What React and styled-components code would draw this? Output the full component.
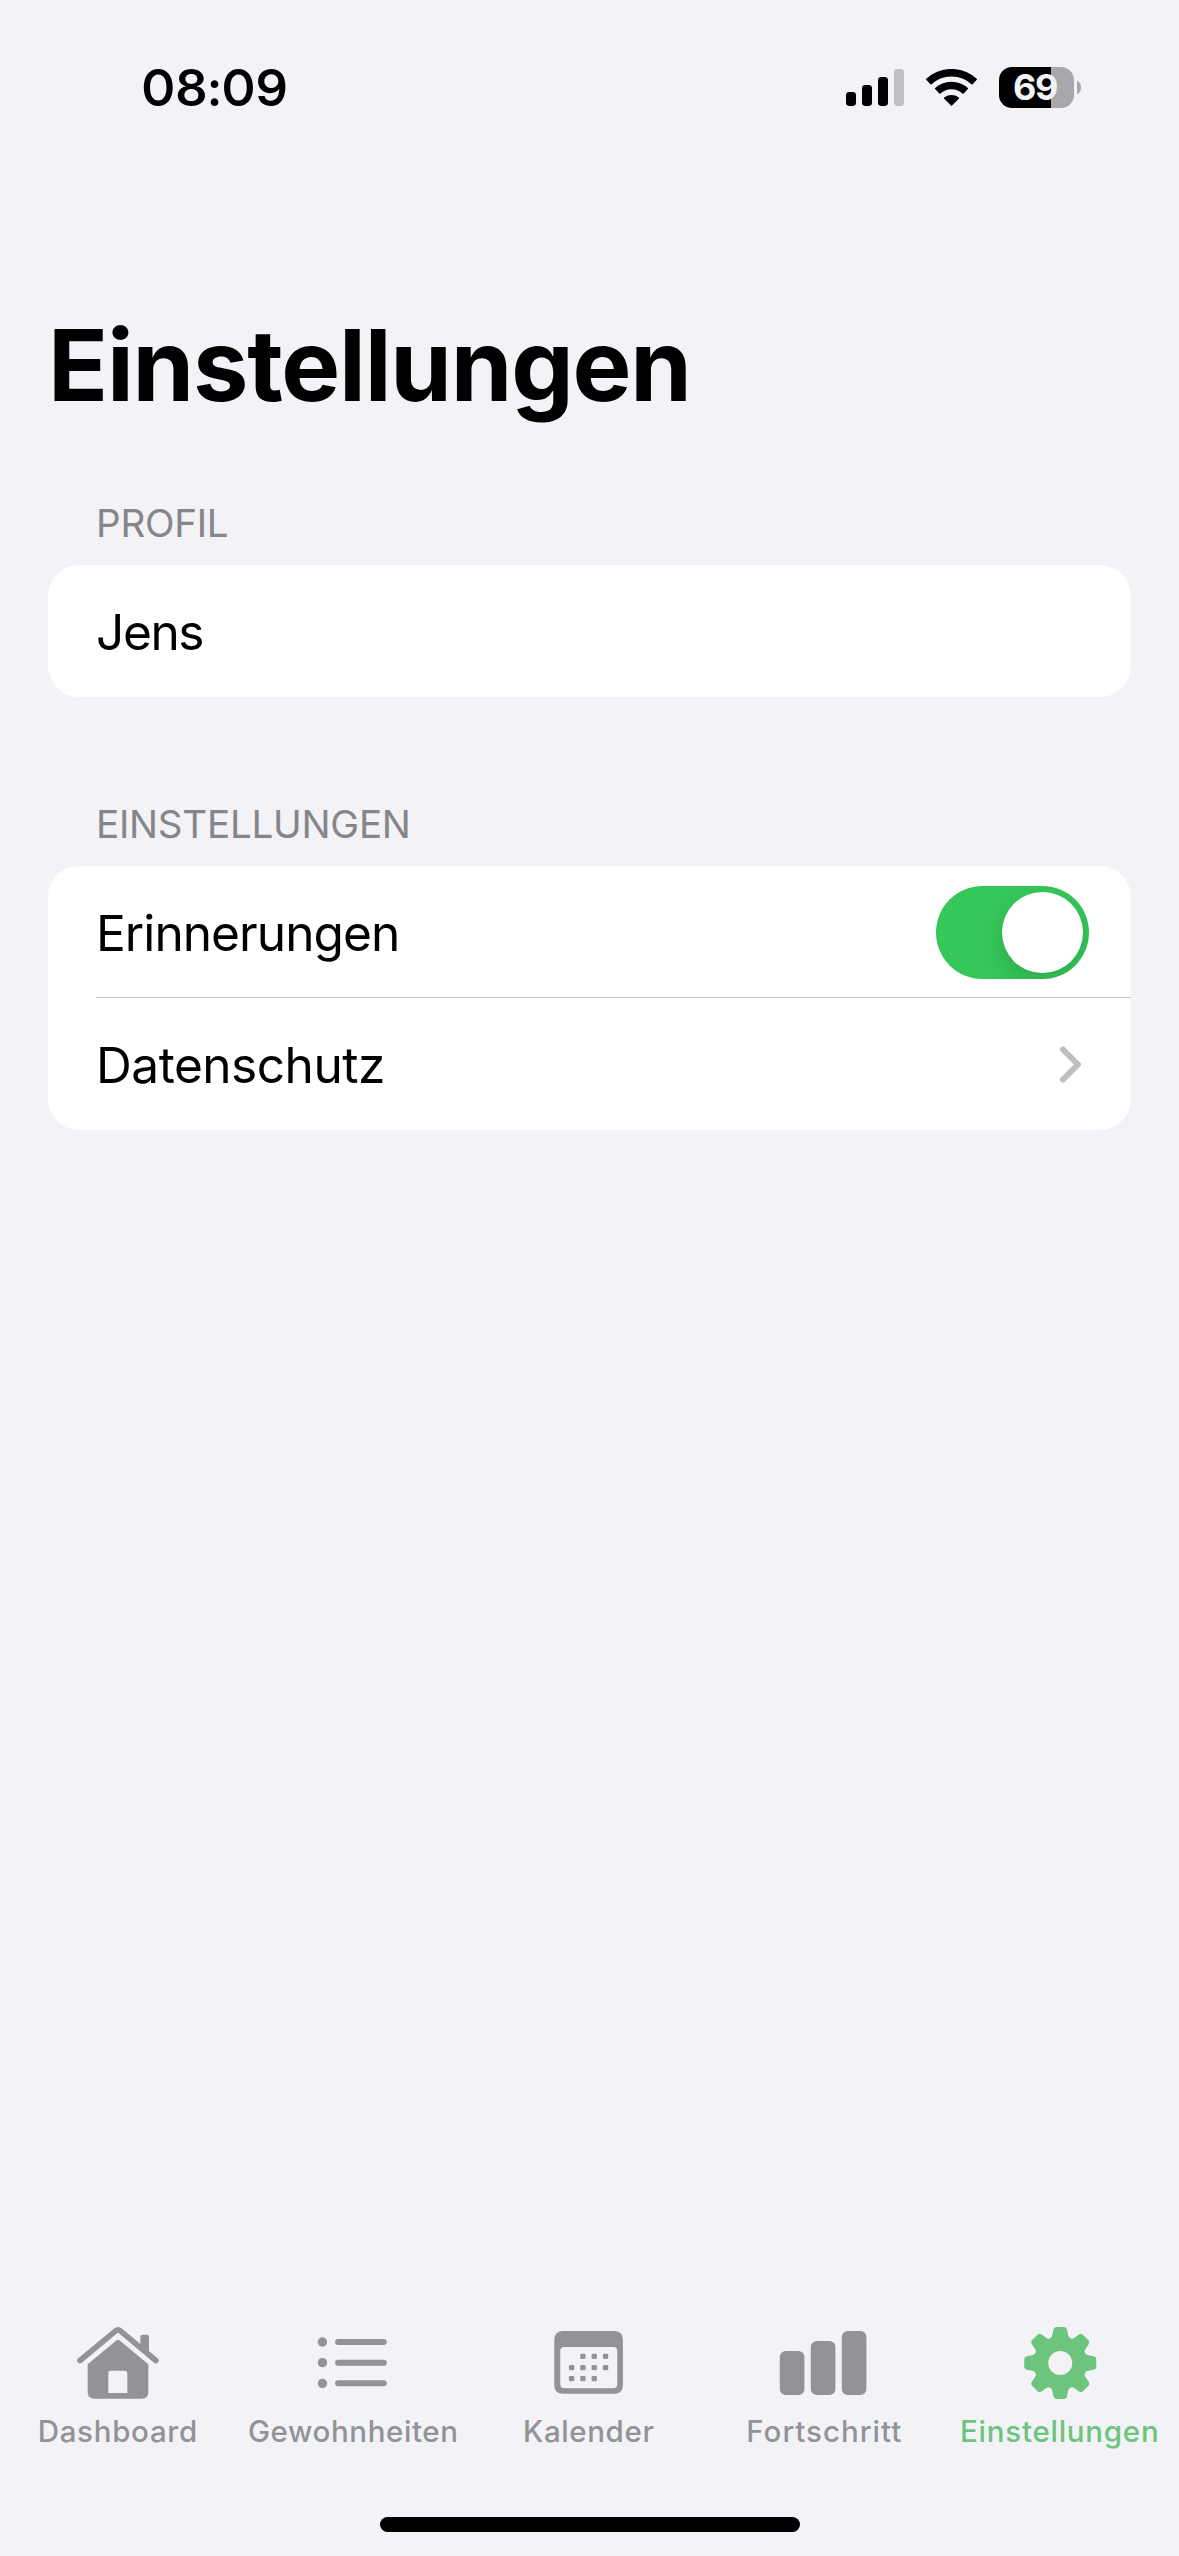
import { useState } from "react";
import styled, { createGlobalStyle } from "styled-components";

const GlobalStyle = createGlobalStyle`
  body {
    margin: 0;
    background: #f2f2f7;
  }
  * {
    box-sizing: border-box;
  }
`;

const ScreenEl = styled.div`
  display: flex;
  flex-direction: column;
  width: 1179px;
  height: 2556px;
  overflow: hidden;
  background: #f2f2f7;
  color: #000;
  font-family: Inter, "Liberation Sans", sans-serif;
`;

/* status bar */
const StatusBarEl = styled.header`
  display: flex;
  justify-content: space-between;
  align-items: center;
  height: 175px;
  padding: 0 98px 0 142px;
`;
const TimeEl = styled.div`
  padding-top: 1px;
  font-family: "Inter Display", Inter, "Liberation Sans", sans-serif;
  font-size: 51px;
  font-weight: 600;
  line-height: 60px;
  letter-spacing: 1.6px;
`;
const StatusIconsEl = styled.div`
  display: flex;
  align-items: center;
  gap: 22px;
`;
const BatteryEl = styled.div`
  display: flex;
  align-items: center;
  gap: 3px;
`;
const BatteryBodyEl = styled.div`
  width: 75px;
  height: 41px;
  padding-right: 3px;
  border-radius: 13px;
  background: linear-gradient(to right, #000 52px, #a8a7ac 52px);
  color: #f2f2f7;
  font-size: 36px;
  font-weight: 700;
  line-height: 41px;
  letter-spacing: -1.5px;
  text-align: center;
`;
const BatteryCapEl = styled.div`
  width: 4px;
  height: 13px;
  border-radius: 0 4px 4px 0 / 0 6.5px 6.5px 0;
  background: #a8a7ac;
`;

/* content */
const ContentEl = styled.main`
  flex: 1;
  padding: 130px 48px 0;
`;
const TitleEl = styled.h1`
  margin: 0 0 74px;
  font-size: 99px;
  font-weight: 700;
  line-height: 120px;
  letter-spacing: -1.2px;
  white-space: nowrap;
`;
const SectionEl = styled.section`
  margin-bottom: 103px;
`;
const SectionTitleEl = styled.h2`
  margin: 0 0 18px;
  padding-left: 48px;
  color: #85858a;
  font-size: 38.6px;
  font-weight: 400;
  line-height: 48px;
  letter-spacing: -0.25px;
  text-transform: uppercase;
`;
const CardEl = styled.div`
  border-radius: 31px;
  background: #fff;
`;
const RowEl = styled.div`
  display: flex;
  justify-content: space-between;
  align-items: center;
  height: 132px;
  margin-left: 48px;
  padding: 2px ${(p) => p.$right || 49}px 0 0;
  border-bottom: ${(p) => (p.$divider ? "1px solid #c6c6c8" : "none")};
  font-size: 49.6px;
  line-height: 60px;
  letter-spacing: ${(p) => p.$tracking || -0.95}px;
`;
const SwitchEl = styled.button`
  display: flex;
  justify-content: ${(p) => (p.$on ? "flex-end" : "flex-start")};
  width: 153px;
  height: 93px;
  padding: 6px;
  border: 0;
  border-radius: 47px;
  overflow: hidden;
  background: ${(p) => (p.$on ? "#35c759" : "#e9e9ea")};
`;
const KnobEl = styled.span`
  width: 81px;
  height: 81px;
  border-radius: 50%;
  background: #fff;
  box-shadow: 0 9px 24px rgba(0, 0, 0, 0.15);
`;
const ChevronEl = styled.svg`
  margin-bottom: 2px;
`;

/* tab bar */
const TabBarEl = styled.nav`
  display: grid;
  grid-template-columns: repeat(5, 235.5px);
  height: 172px;
`;
const TabEl = styled.a`
  display: flex;
  flex-direction: column;
  align-items: center;
  gap: 9px;
  color: ${(p) => (p.$active ? "#6cc47d" : "#929397")};
  font-size: 29.5px;
  font-weight: 500;
  line-height: 36px;
  letter-spacing: ${(p) => p.$tracking}px;
  white-space: nowrap;
`;
const HomeIndicatorEl = styled.div`
  width: 420px;
  height: 15px;
  margin: 25px auto 24px 380px;
  border-radius: 8px;
  background: #000;
`;

const SignalIcon = () => (
  <svg width="58" height="37" viewBox="0 0 58 37">
    <rect x="0" y="23" width="10" height="14" rx="3.4" />
    <rect x="16" y="16" width="10" height="21" rx="3.4" />
    <rect x="32" y="8" width="10" height="29" rx="3.4" />
    <rect x="48" y="0" width="10" height="37" rx="3.4" fill="#bfbec4" />
  </svg>
);

const WifiIcon = () => (
  <svg width="51" height="37" viewBox="288.5 57 153 111">
    <g fill="none" stroke="#000" strokeWidth="22.5">
      <path d="M295.5 96.1A100 100 0 0 1 434.5 96.1" />
      <path d="M322.3 123.8A61.5 61.5 0 0 1 407.7 123.8" />
    </g>
    <path d="M365 168L343 146.500Q341 144 344 142A35 35 0 0 1 386 142Q389 144 387 146.500Z" />
  </svg>
);

const ChevronIcon = () => (
  <ChevronEl width="22" height="37" viewBox="0 0 22 37">
    <path
      d="M3 3.500L18 18.500L3 33.500"
      fill="none"
      stroke="#bfbfbf"
      strokeWidth="6"
      strokeLinecap="round"
      strokeLinejoin="round"
    />
  </ChevronEl>
);

const TabIcon = ({ x, children }) => (
  <svg width="90" height="84" viewBox={`${x} 30 270 252`} fill="currentColor">
    {children}
  </svg>
);

const HomeIcon = () => (
  <TabIcon x={158}>
    <path
      d="M179 151.500L286 62.500Q293 57 300 62.500L406.500 151.500"
      fill="none"
      stroke="currentColor"
      strokeWidth="17"
      strokeLinecap="round"
    />
    <path d="M360 113V80Q360 74 366 74H380Q386 74 386 80V135Z" />
    <path
      fillRule="evenodd"
      d="M202 163L287 92Q293 87 299 92L384 163V246Q384 266 364 266H222Q202 266 202 246ZM264 249H321V189Q321 182 314 182H271Q264 182 264 189Z"
    />
  </TabIcon>
);

const ListIcon = () => (
  <TabIcon x={234.75}>
    {[96, 158, 220].map((y) => (
      <g key={y}>
        <circle cx="278" cy={y} r="14" />
        <rect x="316" y={y - 9} width="155" height="18" rx="9" />
      </g>
    ))}
  </TabIcon>
);

const dots = [
  [248, 139], [282, 139], [316, 139],
  [214, 173], [248, 173], [282, 173], [316, 173],
  [214, 206], [248, 206], [282, 206],
];

const CalendarIcon = () => (
  <TabIcon x={131.25}>
    <path
      fillRule="evenodd"
      d="M189 63H341Q368 63 368 90V224Q368 251 341 251H189Q162 251 162 224V90Q162 63 189 63ZM192 111Q180 111 180 123V223Q180 235 192 235H339Q351 235 351 223V123Q351 111 339 111Z"
    />
    {dots.map(([x, y]) => (
      <rect key={`${x}-${y}`} x={x - 8} y={y - 8} width="16" height="16" rx="4" />
    ))}
  </TabIcon>
);

const ChartIcon = () => (
  <TabIcon x={147.75}>
    <rect x="150" y="123" width="74" height="132" rx="18" />
    <rect x="243" y="93" width="74" height="162" rx="18" />
    <rect x="336" y="63" width="74" height="192" rx="18" />
  </TabIcon>
);

const GearIcon = () => (
  <TabIcon x={209.25}>
    <g transform="translate(345 159)">
      <circle r="57.5" fill="none" stroke="currentColor" strokeWidth="43" />
      {[0, 45, 90, 135, 180, 225, 270, 315].map((angle) => (
        <path
          key={angle}
          transform={`rotate(${angle})`}
          d="M-30.600 -73.900Q-25 -76 -23.500 -84L-20.500 -100Q-19 -108 -12 -108H12Q19 -108 20.500 -100L23.500 -84Q25 -76 30.600 -73.900L20 -50H-20Z"
        />
      ))}
    </g>
  </TabIcon>
);

const tabs = [
  { name: "Dashboard", Icon: HomeIcon, tracking: 0.7 },
  { name: "Gewohnheiten", Icon: ListIcon, tracking: 0.6 },
  { name: "Kalender", Icon: CalendarIcon, tracking: 0.6 },
  { name: "Fortschritt", Icon: ChartIcon, tracking: 1 },
  { name: "Einstellungen", Icon: GearIcon, tracking: 0.75 },
];

const App = () => {
  const [reminders, setReminders] = useState(true);
  const [active, setActive] = useState("Einstellungen");

  return (
    <ScreenEl>
      <GlobalStyle />
      <StatusBarEl>
        <TimeEl>08:09</TimeEl>
        <StatusIconsEl>
          <SignalIcon />
          <WifiIcon />
          <BatteryEl>
            <BatteryBodyEl>69</BatteryBodyEl>
            <BatteryCapEl />
          </BatteryEl>
        </StatusIconsEl>
      </StatusBarEl>

      <ContentEl>
        <TitleEl>Einstellungen</TitleEl>

        <SectionEl>
          <SectionTitleEl>Profil</SectionTitleEl>
          <CardEl>
            <RowEl $tracking={-1.4}>Jens</RowEl>
          </CardEl>
        </SectionEl>

        <SectionEl>
          <SectionTitleEl>Einstellungen</SectionTitleEl>
          <CardEl>
            <RowEl $divider $right={42}>
              Erinnerungen
              <SwitchEl $on={reminders} onClick={() => setReminders(!reminders)}>
                <KnobEl />
              </SwitchEl>
            </RowEl>
            <RowEl $tracking={-0.5}>
              Datenschutz
              <ChevronIcon />
            </RowEl>
          </CardEl>
        </SectionEl>
      </ContentEl>

      <TabBarEl>
        {tabs.map(({ name, Icon, tracking }) => (
          <TabEl
            key={name}
            $active={name === active}
            $tracking={tracking}
            onClick={() => setActive(name)}
          >
            <Icon />
            {name}
          </TabEl>
        ))}
      </TabBarEl>
      <HomeIndicatorEl />
    </ScreenEl>
  );
};

export default App;
